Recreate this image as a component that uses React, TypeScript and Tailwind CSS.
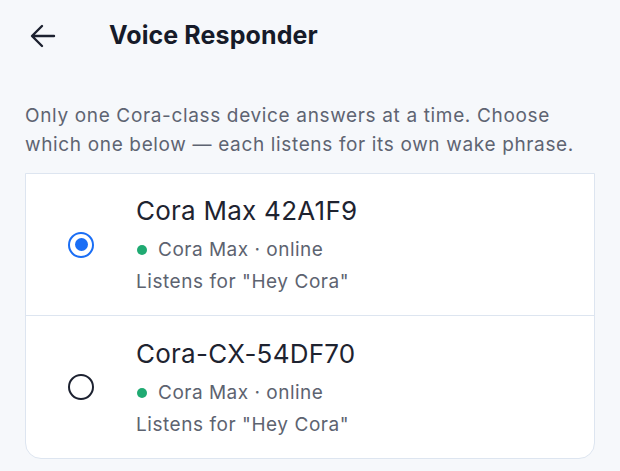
import React from "react";

const font = { fontFamily: "Inter, 'Noto Sans', sans-serif" };

function Row({ name, selected, last }: { name: string; selected: boolean; last?: boolean }) {
  return (
    <div className={`flex items-center h-[142px] ${last ? "" : "border-b border-[#dde5f0]"}`}>
      <div className="w-[110px] flex justify-center">
        {selected ? (
          <div className="w-[26px] h-[26px] rounded-full border-[2.5px] border-[#1a6ef5] flex items-center justify-center">
            <div className="w-[13px] h-[13px] rounded-full bg-[#1a6ef5]" />
          </div>
        ) : (
          <div className="w-[26px] h-[26px] rounded-full border-[2.5px] border-[#1c2130]" />
        )}
      </div>
      <div className="flex flex-col">
        <div className="text-[26px] leading-[32px] text-[#1e2330] tracking-[0.25px]">{name}</div>
        <div className="flex items-center mt-[11px] text-[19px] leading-[24px] text-[#5d6370] tracking-[0.5px]">
          <span className="w-[10px] h-[10px] rounded-full bg-[#1faa72] ml-[1px] mr-[11px]" />
          Cora Max · online
        </div>
        <div className="mt-[8px] text-[19px] leading-[24px] text-[#5d6370] tracking-[0.55px]">Listens for "Hey Cora"</div>
      </div>
    </div>
  );
}

export default function App() {
  return (
    <div className="w-[620px] h-[471px] bg-[#f6f8fb] overflow-hidden" style={font}>
      <div className="flex items-center h-[72px] pl-[30px]">
        <svg width="26" height="24" viewBox="0 0 26 24" fill="none" stroke="#1c2130" strokeWidth="2.4" strokeLinecap="round" strokeLinejoin="round">
          <path d="M24 12H2.5M12 2L2 12l10 10" />
        </svg>
        <div className="ml-[53px] text-[25px] font-bold text-[#161b29] tracking-[0.1px]">Voice Responder</div>
      </div>
      <div className="px-[25px] pt-[29px] text-[19px] leading-[29px] text-[#5e6472] tracking-[0.65px]">
        Only one Cora-class device answers at a time. Choose which one below — each listens for its own wake phrase.
      </div>
      <div className="mx-[25px] mt-[14px] w-[570px] bg-white border border-[#dde5f0] rounded-b-[16px]">
        <Row name="Cora Max 42A1F9" selected />
        <Row name="Cora-CX-54DF70" selected={false} last />
      </div>
    </div>
  );
}
